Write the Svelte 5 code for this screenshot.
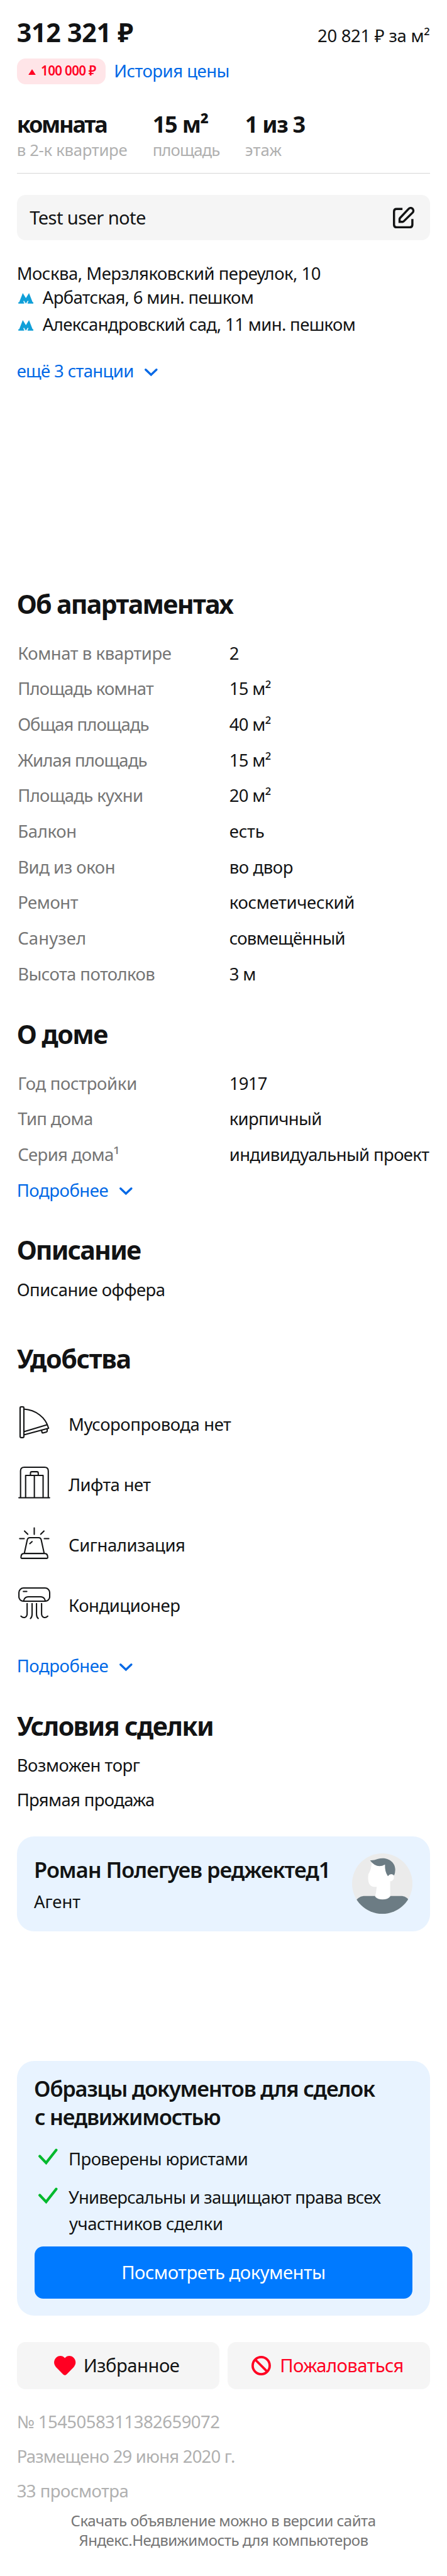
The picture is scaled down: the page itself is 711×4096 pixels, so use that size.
<script>
  // Tracks a text so that its advance equals the given width (1 unit = 0.1rem).
  function fit(node, width) {
    const range = document.createRange();
    range.selectNodeContents(node);
    const unit = parseFloat(getComputedStyle(document.documentElement).fontSize) / 10;
    const natural = range.getBoundingClientRect().width;
    const count = node.textContent.length;
    if (count > 1) node.style.letterSpacing = `${(width * unit - natural) / count}px`;
  }

  const specs = [
    { value: 'комната', valueWidth: 83.2, label: 'в 2-к квартире', labelWidth: 102.3 },
    { value: '15 м²', valueWidth: 51.5, label: 'площадь', labelWidth: 62.2 },
    { value: '1 из 3', valueWidth: 55.3, label: 'этаж', labelWidth: 34 }
  ];

  const stations = [
    { text: 'Арбатская, 6 мин. пешком', width: 195.3 },
    { text: 'Александровский сад, 11 мин. пешком', width: 289.6 }
  ];

  const flat = [
    ['Комнат в квартире', 142.2, '2', 9],
    ['Площадь комнат', 125.6, '15 м²', 38.4],
    ['Общая площадь', 121.3, '40 м²', 38.4],
    ['Жилая площадь', 119.6, '15 м²', 38.4],
    ['Площадь кухни', 116, '20 м²', 38.4],
    ['Балкон', 54.5, 'есть', 32.5],
    ['Вид из окон', 90.2, 'во двор', 59],
    ['Ремонт', 55.8, 'косметический', 116],
    ['Санузел', 63.5, 'совмещённый', 107.2],
    ['Высота потолков', 127, '3 м', 24.4]
  ];

  const house = [
    ['Год постройки', 110.5, '1917', 35],
    ['Тип дома', 69.5, 'кирпичный', 85.5],
    ['Серия дома¹', 94, 'индивидуальный проект', 185]
  ];

  const amenities = [
    { icon: 'chute', text: 'Мусоропровода нет', width: 150.5 },
    { icon: 'lift', text: 'Лифта нет', width: 76 },
    { icon: 'alarm', text: 'Сигнализация', width: 108 },
    { icon: 'climate', text: 'Кондиционер', width: 103.3 }
  ];
</script>

{#snippet chevron()}
  <svg class="chevron" viewBox="0 0 12 7"><path d="M1 1l5 4.8L11 1" /></svg>
{/snippet}

{#snippet table(rows)}
  <dl class="table">
    {#each rows as [name, nameWidth, value, valueWidth]}
      <dt><span use:fit={nameWidth}>{name}</span></dt>
      <dd><span use:fit={valueWidth}>{value}</span></dd>
    {/each}
  </dl>
{/snippet}

<main>
  <header class="price">
    <strong use:fit={107.8}>312 321 ₽</strong>
    <span use:fit={104}>20 821 ₽ за м²</span>
  </header>

  <div class="history">
    <span class="badge">
      <svg viewBox="0 0 7 5.4"><path d="M3.5 0L7 5.4H0z" /></svg>
      <span use:fit={51}>100 000 ₽</span>
    </span>
    <a href="#history"><span use:fit={107}>История цены</span></a>
  </div>

  <div class="specs">
    {#each specs as spec}
      <div>
        <strong><span use:fit={spec.valueWidth}>{spec.value}</span></strong>
        <small><span use:fit={spec.labelWidth}>{spec.label}</span></small>
      </div>
    {/each}
  </div>

  <div class="note">
    <span use:fit={107.5}>Test user note</span>
    <svg viewBox="24 24 120 120">
      <path d="M77 35.5H44Q30 35.5 30 50V123Q30 137.500 44 137.500H118Q132 137.500 132 123V91" />
      <path d="M61 107V91Q61 88 63 86L111 35C116 29 126 28 132 33C138 39 140 48 134 55L84 104Q81 107 78 107Z" />
    </svg>
  </div>

  <div class="address"><span use:fit={281.5}>Москва, Мерзляковский переулок, 10</span></div>
  <ul class="stations">
    {#each stations as station}
      <li>
        <svg viewBox="0 0 14 9.8"><path d="M4.100 0L7 4.700 9.900 0 13.200 8.400H14V9.800H8.600V8.400H9.400L8.900 6.800 7 9.800 5.100 6.800 4.600 8.400H5.400V9.800H0V8.400H.8z" /></svg>
        <span use:fit={station.width}>{station.text}</span>
      </li>
    {/each}
  </ul>
  <a class="more stations-more" href="#stations"><span use:fit={108.3}>ещё 3 станции</span>{@render chevron()}</a>

  <h2 class="flat"><span use:fit={200}>Об апартаментах</span></h2>
  {@render table(flat)}

  <h2 class="house"><span use:fit={84}>О доме</span></h2>
  {@render table(house)}
  <a class="more house-more" href="#house"><span use:fit={84.8}>Подробнее</span>{@render chevron()}</a>

  <h2 class="about"><span use:fit={114.5}>Описание</span></h2>
  <p><span use:fit={137.4}>Описание оффера</span></p>

  <h2 class="comfort"><span use:fit={105.5}>Удобства</span></h2>
  <ul class="amenities">
    {#each amenities as item}
      <li>
        <svg viewBox="0 0 32 32">
          {#if item.icon === 'chute'}
            <rect x="2.900" y="1.800" width="3.500" height="28.400" rx=".8" />
            <path d="M6.400 3.800C17.500 4.500 26.500 11.500 29.300 21.500L6.400 27.700M6.400 24.700L27.800 18.400M22.800 23.400l.4 2q.2.6.8.5l3.300-.9q.8-.2.700-1V22" />
          {:else if item.icon === 'lift'}
            <path d="M1.800 30H30.200M3.300 30V5.200Q3.300 1.700 6.800 1.700H25.500Q29 1.700 29 5.200V30M8 30V9.300H24.200V30M16.100 9.300V30M12.500 9.300V7.200Q12.500 5.900 13.800 5.900H18.400Q19.700 5.900 19.700 7.200V9.300" />
          {:else if item.icon === 'alarm'}
            <path d="M16 2V8M7 4.900L10 7.900M25 4.900L22 7.900M2.500 11.900H6.700M25.300 11.900H29.500M6.800 25.600L9.500 13.200Q10 11.100 12 11.100H20Q22 11.100 22.500 13.200L25.200 25.600M11.900 16.600L14 14.700M6.600 25.700H25.500Q28.500 25.700 28.500 29.400Q28.500 30.200 27.700 30.200H4.500Q3.700 30.200 3.700 29.400Q3.700 25.700 6.600 25.700Z" />
          {:else}
            <rect x="1.800" y="1.800" width="28.500" height="12.200" rx="4.200" />
            <path d="M5.900 5H9.100M6.100 13.800Q7 9.900 10.500 9.900H21.800Q25.400 9.900 26.300 13.800M9.400 16.200V25.500C9.400 29.500 5.900 30 3.700 27.800M14 16.200V26Q14 28.800 12.500 30M18.100 16.200V26Q18.100 28.800 19.700 30M22.800 16.200V25.500C22.800 29.500 26.300 30 28.500 27.800" />
          {/if}
        </svg>
        <span use:fit={item.width}>{item.text}</span>
      </li>
    {/each}
  </ul>
  <a class="more comfort-more" href="#comfort"><span use:fit={84.8}>Подробнее</span>{@render chevron()}</a>

  <h2 class="terms"><span use:fit={182}>Условия сделки</span></h2>
  <p><span use:fit={114}>Возможен торг</span></p>
  <p class="next"><span use:fit={127.5}>Прямая продажа</span></p>

  <section class="agent">
    <div>
      <h3><span use:fit={274.5}>Роман Полегуев реджектед1</span></h3>
      <div class="role"><span use:fit={43}>Агент</span></div>
    </div>
    <svg viewBox="37 42 336 336">
      <defs><clipPath id="face"><circle cx="205" cy="210" r="168" /></clipPath></defs>
      <g clip-path="url(#face)">
        <rect x="37" y="42" width="336" height="336" fill="#ebebeb" />
        <path d="M37 330Q70 279 101 279H315Q345 279 373 330V378H37z" fill="#6c7c84" />
        <path d="M146 92Q145 128 131 151Q126 158 126 176C126 208 136 228 160 228H174Q171 260 165 282Q180 298 206 298Q234 298 249 281V197C276 195 276 158 252 157L235 160 220 95z" fill="#fff" />
        <path d="M137 81Q163 81 181 73C225 58 277 84 277 132Q277 150 271 164Q252 148 236 169Q218 143 220 104Q175 130 137 81Z" fill="#6c7c84" />
      </g>
    </svg>
  </section>

  <section class="docs">
    <h3><span use:fit={315.5}>Образцы документов для сделок</span><br /><span use:fit={172}>с недвижимостью</span></h3>
    <ul>
      <li>
        <svg viewBox="0 0 20 16"><path d="M2 7.500L8.200 14 18 1.500" /></svg>
        <div><span use:fit={166}>Проверены юристами</span></div>
      </li>
      <li>
        <svg viewBox="0 0 20 16"><path d="M2 7.500L8.200 14 18 1.500" /></svg>
        <div><span use:fit={289}>Универсальны и защищают права всех</span><br /><span use:fit={142.500}>участников сделки</span></div>
      </li>
    </ul>
    <button class="primary"><span use:fit={189}>Посмотреть документы</span></button>
  </section>

  <div class="actions">
    <button class="favorite">
      <svg viewBox="0 0 20 18"><path d="M10 2.100C12 -.5 15.500-.5 17.700 1.300C20.500 3.700 20.700 7.500 18.300 10.300L12 16.800Q10 19 8 16.800L1.700 10.300C-.7 7.500-.5 3.700 2.300 1.300C4.500-.5 8-.5 10 2.100z" /></svg>
      <span use:fit={89}>Избранное</span>
    </button>
    <button class="report">
      <svg viewBox="0 0 18 18"><circle cx="9" cy="9" r="7.900" /><path d="M3.500 3.500L14.500 14.500" /></svg>
      <span use:fit={114.5}>Пожаловаться</span>
    </button>
  </div>

  <div class="meta">
    <div><span use:fit={188}>№ 1545058311382659072</span></div>
    <div><span use:fit={202}>Размещено 29 июня 2020 г.</span></div>
    <div><span use:fit={103.500}>33 просмотра</span></div>
  </div>

  <footer><span use:fit={282.500}>Скачать объявление можно в версии сайта</span><br /><span use:fit={268}>Яндекс.Недвижимость для компьютеров</span></footer>
</main>

<style>
  :global(html) { font-size: 17.172px; }
  :global(body) { background: #fff; overflow: hidden; }
  main {
    box-sizing: border-box;
    height: 238.53rem;
    padding: 1.56rem 1.6rem 0;
    font: 1.6rem/2rem "Noto Sans", sans-serif;
    color: #121314;
    white-space: nowrap;
    text-indent: -.05rem;
  }
  h2, h3, p, ul, dl, dd { margin: 0; padding: 0; }
  ul { list-style: none; }
  svg { display: block; flex: none; }
  button { border: 0; padding: 0; font: inherit; color: inherit; }
  a { color: #0068e6; text-decoration: none; }
  h2 { font-size: 2.4rem; line-height: 2.8rem; font-weight: 700; }
  h3 { font-size: 2rem; line-height: 2.6rem; font-weight: 600; }

  .price { display: flex; justify-content: space-between; align-items: baseline; height: 2.8rem; }
  .price strong { font-size: 2.4rem; line-height: 2.8rem; }

  .history { display: flex; align-items: center; gap: .8rem; height: 2.4rem; margin-top: 1.04rem; }
  .history a { padding-bottom: .03rem; }
  .badge {
    display: flex; align-items: center; gap: .5rem;
    box-sizing: border-box; width: 8.2rem; height: 2.4rem; padding: 0 0 .1rem 1.04rem;
    border-radius: .8rem; background: #ffe5e8; color: #ff0022;
    font-size: 1.2rem; font-weight: 600;
  }
  .badge svg { width: .7rem; height: .54rem; margin-top: .25rem; fill: currentColor; }

  .specs { display: flex; gap: 2.4rem; margin-top: 2.42rem; padding-bottom: 1.11rem; border-bottom: 1px solid #d6d6d6; }
  .specs strong, .specs small { display: block; }
  .specs strong { font-size: 2.1rem; line-height: 2.6rem; }
  .specs small { margin-top: .07rem; font-size: 1.5rem; line-height: 2rem; color: #b0b0b0; }

  .note {
    display: flex; justify-content: space-between; align-items: center;
    height: 4.18rem; margin-top: 2rem; padding: 0 1.4rem 0 1.2rem;
    border-radius: .8rem; background: #f5f5f5; font-size: 1.7rem;
  }
  .note svg { width: 2rem; height: 2rem; fill: none; stroke: #121314; stroke-width: 12; }

  .address { margin-top: 2.1rem; }
  .stations { display: grid; gap: .5rem; margin-top: .23rem; }
  .stations li { display: flex; align-items: center; gap: .9rem; padding-left: .08rem; }
  .stations svg { width: 1.42rem; height: .98rem; margin-top: .15rem; fill: #0f9fd8; }

  .more { display: flex; align-items: center; gap: 1.02rem; }
  .chevron { width: 1.2rem; height: .7rem; margin-top: .2rem; overflow: visible; fill: none; stroke: currentColor; stroke-width: 2; stroke-linecap: round; }
  .stations-more { margin-top: 2.33rem; }
  .house-more { margin-top: .63rem; }
  .comfort-more { margin-top: 3.19rem; }

  .flat { margin-top: 19.12rem; }
  .house { margin-top: 2.49rem; }
  .about { margin-top: 3.11rem; }
  .comfort { margin-top: 3.94rem; }
  .terms { margin-top: 3.1rem; }

  .table { display: grid; grid-template-columns: 19.6rem 1fr; grid-auto-rows: 3.3rem; margin-top: 1.55rem; padding-left: .09rem; line-height: 3.3rem; }
  dt { color: #757575; }

  p { margin-top: 1.31rem; }
  p.next { margin-top: 1.2rem; }

  .amenities { display: grid; gap: 2.4rem; margin-top: 2.91rem; }
  .amenities li { display: flex; align-items: center; gap: 1.6rem; height: 3.2rem; }
  .amenities svg { width: 3.2rem; height: 3.2rem; fill: none; stroke: #121314; stroke-width: 1.200; stroke-linecap: round; stroke-linejoin: round; }
  .amenities span { padding-top: .4rem; }

  .agent {
    display: flex; justify-content: space-between; align-items: center;
    height: 8.8rem; margin-top: 2.36rem; padding: 0 1.6rem; border-radius: 1.6rem; background: #e8f3ff;
  }
  .agent > div { padding-top: .1rem; }
  .agent svg { width: 5.6rem; height: 5.6rem; }
  .role { margin-top: .66rem; }

  .docs { box-sizing: border-box; height: 23.6rem; margin-top: 12rem; padding: 1.28rem 1.6rem 0; border-radius: 1.6rem; background: #e8f3ff; }
  .docs ul { display: grid; gap: 1.2rem; margin-top: 1.36rem; line-height: 2.4rem; }
  .docs li { display: flex; gap: 1rem; padding-left: .3rem; }
  .docs li svg { width: 1.9rem; height: 1.55rem; margin-top: .28rem; fill: none; stroke: #00b92d; stroke-width: 2.600; stroke-linecap: round; }
  .primary { display: block; width: 100%; height: 4.8rem; margin-top: .96rem; padding-bottom: .05rem; border-radius: .8rem; background: #007aff; color: #fff; font-size: 1.7rem; }

  .actions { display: grid; grid-template-columns: 1fr 1fr; gap: .7rem; margin-top: 2.4rem; }
  .actions button { display: flex; align-items: center; justify-content: center; height: 4.4rem; border-radius: .8rem; background: #f5f5f5; font-size: 1.7rem; }
  .actions span { padding-bottom: .06rem; }
  .favorite { gap: .7rem; padding-right: .3rem; }
  .favorite svg { width: 2rem; height: 1.8rem; fill: #ff0022; }
  .report { gap: .85rem; padding-right: .2rem; }
  .actions .report { color: #ff0022; }
  .report svg { width: 1.8rem; height: 1.8rem; fill: none; stroke: currentColor; stroke-width: 2.200; }

  .meta { display: grid; gap: 1.2rem; margin-top: 2.03rem; color: #b0b0b0; }
  footer { margin-top: .85rem; text-align: center; font-size: 1.4rem; line-height: 1.8rem; color: #757575; }
</style>
